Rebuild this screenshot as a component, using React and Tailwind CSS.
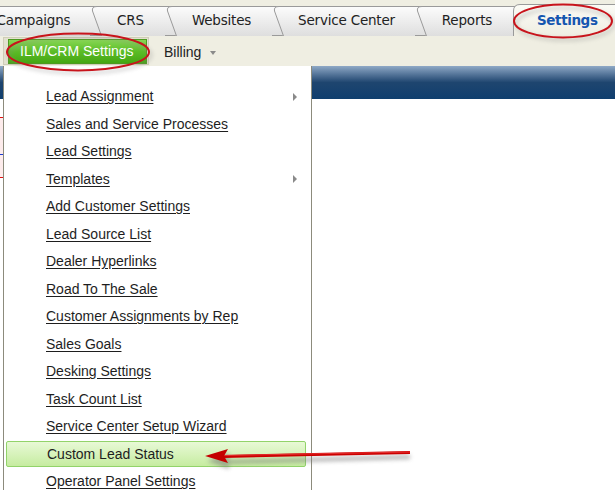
import React from "react";

const tabs = [
    { label: "Campaigns", w: 119 },
    { label: "CRS", w: 75 },
    { label: "Websites", w: 107 },
    { label: "Service Center", w: 143 },
    { label: "Reports", w: 98 },
];

const items = [
    { label: "Lead Assignment", sub: true },
    { label: "Sales and Service Processes" },
    { label: "Lead Settings" },
    { label: "Templates", sub: true },
    { label: "Add Customer Settings" },
    { label: "Lead Source List" },
    { label: "Dealer Hyperlinks" },
    { label: "Road To The Sale" },
    { label: "Customer Assignments by Rep" },
    { label: "Sales Goals" },
    { label: "Desking Settings" },
    { label: "Task Count List" },
    { label: "Service Center Setup Wizard" },
    { label: "Custom Lead Status", active: true },
    { label: "Operator Panel Settings" },
];

function Tab({ label, w, idx }) {
    const e = w + 16;
    const gid = "tabgrad" + idx;
    return (
        <div className="relative h-[30px] shrink-0 border-b border-[#9a9a9a] flex items-center justify-center" style={{ width: w }}>
            <svg className="absolute left-0 top-0 overflow-visible" width={e} height="30">
                <defs>
                    <linearGradient id={gid} x1="0" y1="0" x2="0" y2="1">
                        <stop offset="0" stopColor="#fcfcfc" />
                        <stop offset="1" stopColor="#dedede" />
                    </linearGradient>
                </defs>
                <path d={`M11 30 L2.5 5 Q1.5 0.5 7 0.5 L${e} 0.5 L${e} 30 Z`} fill={`url(#${gid})`} />
                <path d={`M11.5 30 L2.5 5 Q1.5 0.5 7 0.5 L${e} 0.5`} fill="none" stroke="#9a9a9a" />
            </svg>
            <span className="relative text-[13.5px] text-[#222] font-['DejaVu_Sans',sans-serif] tracking-[-0.2px] pl-[6px]">{label}</span>
        </div>
    );
}

export default function App() {
    return (
        <div className="relative w-[615px] h-[490px] overflow-hidden bg-white font-['Liberation_Sans',Arial,sans-serif]">
            {/* tab row */}
            <div className="h-[36px] bg-[#efeee2] flex items-end">
                <div className="flex items-end ml-[-29px]">
                    {tabs.map((t, i) => (
                        <Tab key={t.label} idx={i} {...t} />
                    ))}
                    <div className="relative h-[32px] w-[110px] shrink-0 flex items-center pl-[24px]">
                        <svg className="absolute left-0 top-0" width="110" height="32">
                            <defs>
                                <linearGradient id="act" x1="0" y1="0" x2="0" y2="1">
                                    <stop offset="0" stopColor="#fbfbf6" />
                                    <stop offset="1" stopColor="#efeee2" />
                                </linearGradient>
                            </defs>
                            <path d="M0.5 32 L0.5 7 Q0.5 0.5 7 0.5 L110 0.5 L110 32 Z" fill="url(#act)" />
                            <path d="M0.5 32 L0.5 7 Q0.5 0.5 7 0.5 L110 0.5" fill="none" stroke="#9a9a9a" />
                        </svg>
                        <span className="relative text-[13.5px] font-bold tracking-[-0.4px] text-[#1556b0] font-['DejaVu_Sans',sans-serif]">Settings</span>
                    </div>
                </div>
            </div>

            {/* sub nav row */}
            <div className="h-[30px] bg-[#efeee2] flex items-center">
                <div className="ml-[3px] h-[28px] pl-[4px] pr-[1px] py-[1px] border border-[#cfcdb8] bg-[#e2e0cf] flex">
                    <div className="w-[139px] h-[25px] flex items-center pl-[11px] text-[14px] text-white bg-gradient-to-b from-[#86d852] via-[#5cbc26] to-[#44a612] border border-[#4d9a20]">
                        ILM/CRM Settings
                    </div>
                </div>
                <div className="ml-[15px] mt-[2px] flex items-center gap-[9px] text-[14px] text-[#222]">
                    Billing
                    <span className="w-0 h-0 border-l-[3.5px] border-r-[3.5px] border-t-[4px] border-l-transparent border-r-transparent border-t-[#8a8a8a] mt-[1px]" />
                </div>
            </div>

            {/* body */}
            <div className="flex h-[424px]">
                <div className="w-[3px] shrink-0 flex flex-col">
                    <div className="h-[33px] bg-gradient-to-b from-[#8fa9c6] via-[#1e456f] to-[#0f3e6e]" />
                    <div className="h-[18px]" />
                    <div className="h-[61px] bg-[#fdecec] border-y border-[#e01010] flex items-center">
                        <span className="w-[3px] h-[14px] border-b border-[#1a3cd0]" />
                    </div>
                </div>
                <div className="w-[309px] shrink-0 bg-white border-x border-[#8c8b7c] pt-[17px] relative z-10">
                    {items.map((it) =>
                        it.active ? (
                            <div key={it.label} className="h-[27.5px] flex items-center">
                                <div className="ml-[2px] w-[300px] h-[26px] flex items-center pl-[40px] rounded-[2px] border border-[#92d36a] bg-gradient-to-b from-[#e8f9d6] to-[#c6eca0] text-[14px] text-[#1e1e1e]">
                                    {it.label}
                                </div>
                            </div>
                        ) : (
                            <div key={it.label} className="h-[27.5px] flex items-center pl-[42px] pr-[14px] text-[14px] text-[#1e1e1e]">
                                <span className="underline underline-offset-[2px] flex-1">{it.label}</span>
                                {it.sub && (
                                    <span className="w-0 h-0 border-t-[4px] border-b-[4px] border-l-[4px] border-t-transparent border-b-transparent border-l-[#8a8a8a]" />
                                )}
                            </div>
                        )
                    )}
                </div>
                <div className="flex-1">
                    <div className="h-[33px] bg-gradient-to-b from-[#8fa9c6] via-[#1e456f] to-[#0f3e6e]" />
                </div>
            </div>

            {/* annotations */}
            <svg className="absolute inset-0 pointer-events-none z-20" width="615" height="490">
                <defs>
                    <filter id="sh" x="-20%" y="-50%" width="140%" height="200%">
                        <feGaussianBlur stdDeviation="2" />
                    </filter>
                </defs>
                <ellipse cx="80" cy="55" rx="71" ry="18" fill="none" stroke="#888" strokeWidth="2" opacity="0.5" filter="url(#sh)" />
                <ellipse cx="78" cy="52" rx="71" ry="18.5" fill="none" stroke="#c8141c" strokeWidth="2" />
                <ellipse cx="565" cy="24" rx="49" ry="16" fill="none" stroke="#888" strokeWidth="2" opacity="0.5" filter="url(#sh)" />
                <ellipse cx="563" cy="21" rx="49" ry="16.5" fill="none" stroke="#c8141c" strokeWidth="2" />
                <g filter="url(#sh)" opacity="0.55">
                    <path d="M410 457 L226 462" stroke="#777" strokeWidth="4" />
                    <path d="M207 461 L229 453 L229 469 Z" fill="#777" />
                </g>
                <path d="M410 452.5 L224 456.5" stroke="#c00" strokeWidth="3" />
                <path d="M410 452 L224 455.5" stroke="#e43030" strokeWidth="1" />
                <path d="M205 456 L228 449 L224 456 L228 463 Z" fill="#c40000" />
            </svg>
        </div>
    );
}
